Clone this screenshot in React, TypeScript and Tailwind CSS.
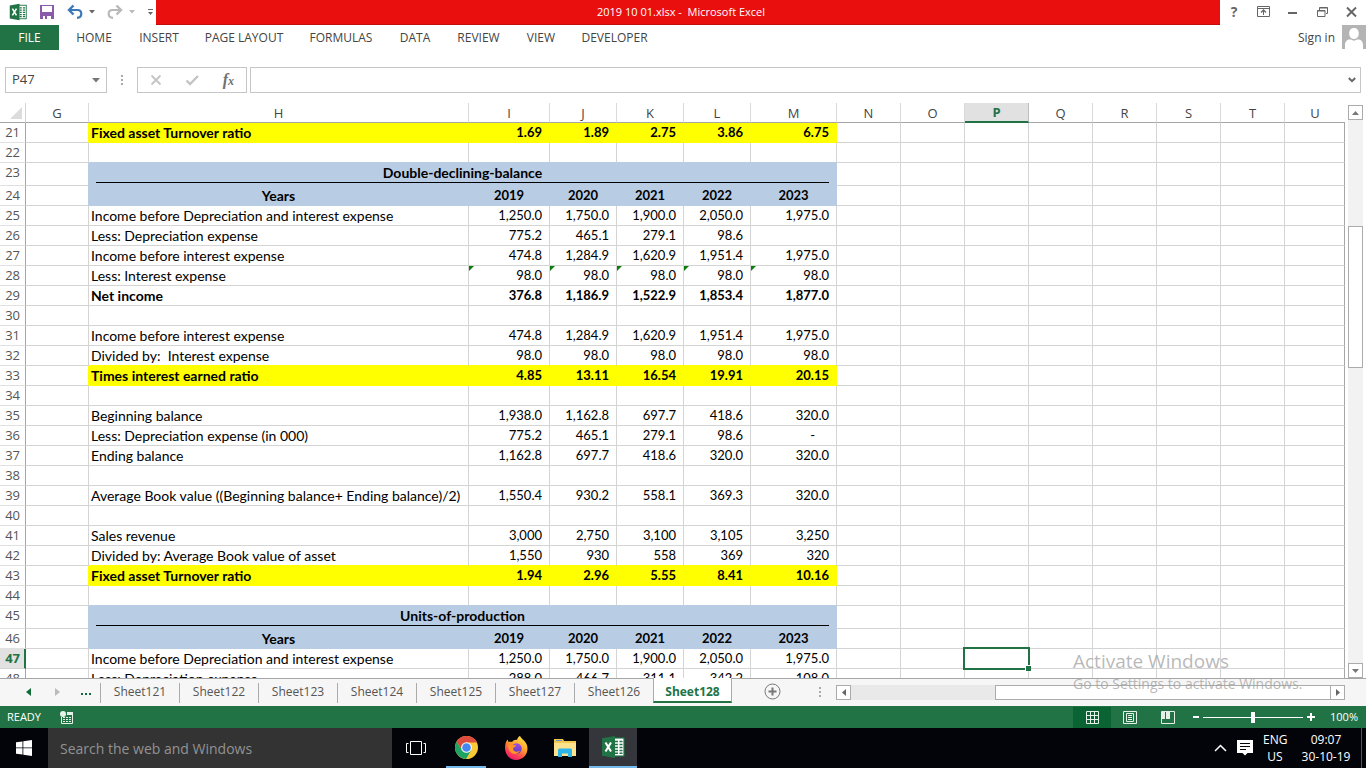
import React from "react";

const columns = ["G", "H", "I", "J", "K", "L", "M", "N", "O", "P", "Q", "R", "S", "T", "U"];
const blankColumns = ["N", "O", "P", "Q", "R", "S", "T", "U"];

type Kind = "plain" | "bold" | "ratio" | "title" | "years" | "empty" | "flagged";
type Row = { n: number; kind: Kind; label?: string; values?: string[] };

const rows: Row[] = [
  { n: 21, kind: "ratio", label: "Fixed asset Turnover ratio", values: ["1.69", "1.89", "2.75", "3.86", "6.75"] },
  { n: 22, kind: "empty" },
  { n: 23, kind: "title", label: "Double-declining-balance" },
  { n: 24, kind: "years", label: "Years", values: ["2019", "2020", "2021", "2022", "2023"] },
  { n: 25, kind: "plain", label: "Income before Depreciation and interest expense", values: ["1,250.0", "1,750.0", "1,900.0", "2,050.0", "1,975.0"] },
  { n: 26, kind: "plain", label: "Less: Depreciation expense", values: ["775.2", "465.1", "279.1", "98.6", ""] },
  { n: 27, kind: "plain", label: "Income before interest expense", values: ["474.8", "1,284.9", "1,620.9", "1,951.4", "1,975.0"] },
  { n: 28, kind: "flagged", label: "Less: Interest expense", values: ["98.0", "98.0", "98.0", "98.0", "98.0"] },
  { n: 29, kind: "bold", label: "Net income", values: ["376.8", "1,186.9", "1,522.9", "1,853.4", "1,877.0"] },
  { n: 30, kind: "empty" },
  { n: 31, kind: "plain", label: "Income before interest expense", values: ["474.8", "1,284.9", "1,620.9", "1,951.4", "1,975.0"] },
  { n: 32, kind: "plain", label: "Divided by:  Interest expense", values: ["98.0", "98.0", "98.0", "98.0", "98.0"] },
  { n: 33, kind: "ratio", label: "Times interest earned ratio", values: ["4.85", "13.11", "16.54", "19.91", "20.15"] },
  { n: 34, kind: "empty" },
  { n: 35, kind: "plain", label: "Beginning balance", values: ["1,938.0", "1,162.8", "697.7", "418.6", "320.0"] },
  { n: 36, kind: "plain", label: "Less: Depreciation expense (in 000)", values: ["775.2", "465.1", "279.1", "98.6", "-"] },
  { n: 37, kind: "plain", label: "Ending balance", values: ["1,162.8", "697.7", "418.6", "320.0", "320.0"] },
  { n: 38, kind: "empty" },
  { n: 39, kind: "plain", label: "Average Book value ((Beginning balance+ Ending balance)/2)", values: ["1,550.4", "930.2", "558.1", "369.3", "320.0"] },
  { n: 40, kind: "empty" },
  { n: 41, kind: "plain", label: "Sales revenue", values: ["3,000", "2,750", "3,100", "3,105", "3,250"] },
  { n: 42, kind: "plain", label: "Divided by: Average Book value of asset", values: ["1,550", "930", "558", "369", "320"] },
  { n: 43, kind: "ratio", label: "Fixed asset Turnover ratio", values: ["1.94", "2.96", "5.55", "8.41", "10.16"] },
  { n: 44, kind: "empty" },
  { n: 45, kind: "title", label: "Units-of-production" },
  { n: 46, kind: "years", label: "Years", values: ["2019", "2020", "2021", "2022", "2023"] },
  { n: 47, kind: "plain", label: "Income before Depreciation and interest expense", values: ["1,250.0", "1,750.0", "1,900.0", "2,050.0", "1,975.0"] },
  { n: 48, kind: "plain", label: "Less: Depreciation expense", values: ["288.0", "466.7", "311.1", "342.2", "108.0"] },
];

const ribbonTabs = [
  { name: "HOME", width: "w-16" },
  { name: "INSERT", width: "w-[66px]" },
  { name: "PAGE LAYOUT", width: "w-[104px]" },
  { name: "FORMULAS", width: "w-[90px]" },
  { name: "DATA", width: "w-[58px]" },
  { name: "REVIEW", width: "w-[69px]" },
  { name: "VIEW", width: "w-14" },
  { name: "DEVELOPER", width: "w-[91px]" },
];

const sheets = ["Sheet121", "Sheet122", "Sheet123", "Sheet124", "Sheet125", "Sheet127", "Sheet126"];

function ExcelLogo({ className }: { className: string }) {
  return (
    <svg viewBox="0 0 24 24" className={className} aria-hidden="true">
      <rect x="12" y="3" width="11" height="18" fill="#fff" stroke="#217346" strokeWidth="1.2" />
      <path d="M14 6.5h3M18.500 6.500h3M14 9.500h3M18.500 9.500h3M14 12.500h3M18.500 12.500h3M14 15.500h3M18.500 15.500h3M14 18.200h3M18.500 18.200h3" stroke="#217346" strokeWidth="1.600" />
      <path d="M1 3.200 14 1v22L1 20.800z" fill="#217346" />
      <path d="m4.500 7.500 5.500 9M10 7.500l-5.500 9" stroke="#fff" strokeWidth="2.100" />
    </svg>
  );
}

function TitleBar() {
  return (
    <header className="flex h-[25px] shrink-0 items-start">
      <div className="flex h-6 w-[156px] shrink-0 items-center">
        <ExcelLogo className="ml-[9px] h-[18px] w-[18px]" />
        <button aria-label="Save" className="ml-3">
          <svg viewBox="0 0 16 16" className="h-4 w-4">
            <path d="M1 1h14v14H1z" fill="#8a5bab" />
            <path d="M3 2h10v6H3zM4 10h8v5H4z" fill="#fff" />
            <path d="M4 10h8v2H8v3H6v-3H4zM12 10h1v5h-1z" fill="#8a5bab" />
          </svg>
        </button>
        <button aria-label="Undo" className="ml-3 flex items-center gap-1.5">
          <svg viewBox="0 0 16 16" className="h-4 w-4" fill="none" stroke="#3c78b8">
            <path d="M3 6h7.500c2.500 0 3.800 1.800 3.800 3.800 0 2.600-2 4-4.300 4" strokeWidth="2.200" />
            <path d="M6.500 1.500 2 6l4.500 4.500" strokeWidth="2.400" />
          </svg>
          <svg viewBox="0 0 6 4" className="h-1 w-1.5"><path d="M0 0h6L3 3.500z" fill="#666" /></svg>
        </button>
        <button aria-label="Redo" className="ml-3 flex items-center gap-1.5">
          <svg viewBox="0 0 16 16" className="h-4 w-4" fill="none" stroke="#b9b9b9">
            <path d="M13 6H5.500C3 6 1.700 7.800 1.700 9.800c0 2.600 2 4 4.300 4" strokeWidth="2.200" />
            <path d="M9.500 1.500 14 6l-4.500 4.500" strokeWidth="2.400" />
          </svg>
          <svg viewBox="0 0 6 4" className="h-1 w-1.5"><path d="M0 0h6L3 3.500z" fill="#b9b9b9" /></svg>
        </button>
        <button aria-label="Customize Quick Access Toolbar" className="ml-3">
          <svg viewBox="0 0 7 8" className="h-2 w-[7px]"><path d="M1 1.500h5" stroke="#666" /><path d="M1 4h5L3.500 7z" fill="#666" /></svg>
        </button>
      </div>
      <h1 className="flex h-full flex-1 items-center justify-center whitespace-pre border-b border-[#c00d0d] bg-[#ea0f0f] pr-3.5 text-[11px] text-white">
        {"2019 10 01.xlsx -  Microsoft Excel"}
      </h1>
      <div className="flex h-[23px] w-[146px] shrink-0 items-center">
        <button aria-label="Help" className="ml-2.5 w-2 text-[14px] leading-4 font-bold text-[#666]">?</button>
        <button aria-label="Ribbon display options" className="ml-[19px]">
          <svg viewBox="0 0 13 11" className="h-[11px] w-[13px]" fill="none" stroke="#666">
            <path d="M.5.500h12v10H.5zM.5 2.500h12M6.500 9V4.500" />
            <path d="M4 6.500 6.500 4 9 6.500" strokeWidth="1.300" />
          </svg>
        </button>
        <button aria-label="Minimize" className="ml-[18px]">
          <svg viewBox="0 0 9 11" className="h-[11px] w-[9px]"><path d="M0 7h9" stroke="#666" strokeWidth="2" /></svg>
        </button>
        <button aria-label="Restore" className="ml-5">
          <svg viewBox="0 0 11 10" className="h-2.5 w-[11px]" fill="none" stroke="#666">
            <path d="M2.500 3V.5h8v6H9M.5 3.500h7.500v6H.5zM.5 4h7.500M2.500 1h8" />
          </svg>
        </button>
        <button aria-label="Close" className="ml-[18px]">
          <svg viewBox="0 0 11 10" className="h-2.5 w-[11px]"><path d="m1 .5 9 9M10 .5l-9 9" stroke="#666" strokeWidth="2" /></svg>
        </button>
      </div>
    </header>
  );
}

function Ribbon() {
  return (
    <nav aria-label="Ribbon" className="flex h-[25px] shrink-0 items-stretch text-xs text-[#444]">
      <button className="mr-[3px] w-[59px] bg-[#217346] text-white">FILE</button>
      {ribbonTabs.map((t) => (
        <button key={t.name} className={`${t.width} whitespace-nowrap`}>{t.name}</button>
      ))}
      <button className="ml-auto mr-[7px]">Sign in</button>
      <svg viewBox="0 0 24 24" className="h-6 w-6" aria-hidden="true">
        <path d="M0 0h24v24H0z" fill="#b4b4b4" />
        <path d="M12 3c3 0 4.800 2.200 4.800 5.500S14.700 14 12 14 7.200 11.800 7.200 8.500 9 3 12 3zM3 24v-4c0-3.500 2-5.500 5-5.500h1c2 1.500 4 1.500 6 0h1c3 0 5 2 5 5.500v4z" fill="#fff" />
      </svg>
    </nav>
  );
}

function FormulaBar() {
  return (
    <div className="flex h-[53px] shrink-0 items-start pt-[17px] pr-[5px] pl-[5px]">
      <div className="flex h-[26px] w-[102px] items-center border border-[#c6c6c6]">
        <input aria-label="Name box" defaultValue="P47" className="w-0 flex-1 pl-1.5 text-[13px] text-[#444] outline-none" />
        <button aria-label="Open name list" className="mr-1.5">
          <svg viewBox="0 0 8 5" className="h-[5px] w-2"><path d="M0 0h8L4 4.500z" fill="#777" /></svg>
        </button>
      </div>
      <svg viewBox="0 0 2 10" className="mx-3.5 mt-2 h-2.5 w-0.5" aria-hidden="true"><path d="M0 0h2v2H0zM0 4h2v2H0zM0 8h2v2H0z" fill="#aaa" /></svg>
      <div className="mr-[3px] flex h-[26px] w-[110px] items-center justify-between border border-[#c6c6c6] pr-3 pl-3">
        <button aria-label="Cancel"><svg viewBox="0 0 12 12" className="h-3 w-3"><path d="m1.500 1.500 9 9M10.500 1.500l-9 9" stroke="#c4c4c4" strokeWidth="1.800" /></svg></button>
        <button aria-label="Enter"><svg viewBox="0 0 14 12" className="h-3 w-3.5"><path d="m1.500 6.500 3.500 3.500L13 2" fill="none" stroke="#c4c4c4" strokeWidth="2.400" /></svg></button>
        <button aria-label="Insert function" className="flex items-baseline font-['Liberation_Serif',serif] leading-5 font-bold text-[#707070] italic">
          <span className="text-base">f</span><span className="text-xs">x</span>
        </button>
      </div>
      <div className="flex h-[26px] flex-1 items-center border border-[#c6c6c6]">
        <input aria-label="Formula" className="h-full w-0 flex-1 px-1 text-[13px] outline-none" />
        <button aria-label="Expand formula bar" className="mr-1">
          <svg viewBox="0 0 8 6" className="h-1.5 w-2"><path d="m.8 1 3.200 3.200L7.200 1" fill="none" stroke="#666" strokeWidth="2" /></svg>
        </button>
      </div>
    </div>
  );
}

function fillOf(kind?: Kind) {
  if (kind === "ratio") return "yellow";
  if (kind === "title" || kind === "years") return "blue";
  return "none";
}

function SheetRow({ row, next }: { row: Row; next?: Row }) {
  const fill = fillOf(row.kind);
  const below = fillOf(next?.kind);
  const bg = fill === "yellow" ? "bg-[#ffff00]" : fill === "blue" ? "bg-[#b8cce4]" : "";
  const right = fill === "yellow" ? "border-r-[#ffff00]" : fill === "blue" ? "border-r-[#b8cce4]" : "border-r-[#d4d4d4]";
  const edge = fill !== "none" ? fill : below;
  const bottom = edge === "yellow" ? "border-b-[#ffff00]" : edge === "blue" ? "border-b-[#b8cce4]" : "border-b-[#d4d4d4]";
  const cell = `border-r border-b p-0 ${bg} ${right} ${bottom}`;
  const weight = row.kind === "plain" || row.kind === "flagged" || row.kind === "empty" ? "font-normal" : "font-bold";
  const selected = row.n === 47;
  return (
    <tr className={row.kind === "title" ? "h-[23px]" : "h-5"}>
      <th
        scope="row"
        className={`border-b p-0 text-right align-top font-['Open_Sans',sans-serif] text-[13px] leading-[19px] ${
          selected
            ? "border-r-2 border-r-[#217346] border-b-[#d4d4d4] bg-[#e1e1e1] pr-1 font-bold text-[#217346]"
            : "border-r border-r-[#a6a6a6] border-b-[#e0e0e0] pr-[5px] font-normal text-[#555]"
        }`}
      >
        {row.n}
      </th>
      <td className={`border-r border-b border-b-[#d4d4d4] p-0 ${right}`} />
      {row.kind === "title" ? (
        <td colSpan={6} className={`${cell} align-top font-bold`}>
          <div className="mx-[7px] h-5 border-b border-black text-center leading-5">{row.label}</div>
        </td>
      ) : (
        <>
          <td className={`${cell} ${weight} whitespace-pre ${row.kind === "years" ? "text-center" : "pl-0.5"}`}>{row.label}</td>
          {["I", "J", "K", "L", "M"].map((c, i) => (
            <td key={c} className={`${cell} ${weight} ${row.kind === "years" ? "text-center" : "pr-[7px] text-right"} relative text-[13px]`}>
              {row.kind === "flagged" && (
                <svg viewBox="0 0 5 5" className="absolute top-0 left-0 h-[5px] w-[5px]" aria-hidden="true"><path d="M0 0h5L0 5z" fill="#0a7d0a" /></svg>
              )}
              {row.values?.[i] === "-" ? <span className="pr-3.5">-</span> : row.values?.[i]}
            </td>
          ))}
        </>
      )}
      {blankColumns.map((c) => (
        <td key={c} className={`relative border-r border-b border-b-[#d4d4d4] p-0 ${c === "U" ? "border-r-[#a6a6a6]" : "border-r-[#d4d4d4]"}`}>
          {selected && c === "P" && (
            <div className="absolute -top-0.5 -right-0.5 -bottom-0.5 -left-0.5 z-10 border-2 border-[#217346]">
              <div className="absolute -right-[3px] -bottom-[3px] h-1.5 w-1.5 border-t border-l border-white bg-[#217346]" />
            </div>
          )}
        </td>
      ))}
    </tr>
  );
}

function Worksheet() {
  return (
    <main className="flex min-h-0 flex-1 border-b border-[#a6a6a6]">
      <div className="min-w-0 flex-1 overflow-hidden">
        <table className="w-full table-fixed border-separate border-spacing-0 font-['Lato',sans-serif] text-sm leading-[19px] text-black">
          <colgroup>
            <col className="w-[26px]" />
            <col className="w-[63px]" />
            <col className="w-[380px]" />
            <col className="w-[81px]" />
            <col className="w-[67px]" />
            <col className="w-[67px]" />
            <col className="w-[67px]" />
            <col className="w-[86px]" />
            <col className="w-16" />
            <col className="w-16" />
            <col className="w-16" />
            <col className="w-16" />
            <col className="w-16" />
            <col className="w-16" />
            <col className="w-16" />
            <col />
          </colgroup>
          <thead>
            <tr className="h-5 font-['Open_Sans',sans-serif] text-[13px] leading-[18px]">
              <td className="border-r border-b border-r-[#d4d4d4] border-b-[#a6a6a6] p-0">
                <svg viewBox="0 0 12 12" className="ml-2.5 h-3 w-3" aria-hidden="true"><path d="M12 0v12H0z" fill="#dcdcdc" /></svg>
              </td>
              {columns.map((c) => (
                <th
                  key={c}
                  scope="col"
                  className={
                    c === "P"
                      ? "border-r border-b-2 border-r-[#bdbdbd] border-b-[#217346] bg-[#e1e1e1] p-0 font-bold text-[#217346]"
                      : c === "U"
                        ? "border-b border-b-[#a6a6a6] p-0 font-normal text-[#444]"
                        : "border-r border-b border-r-[#dadada] border-b-[#a6a6a6] p-0 font-normal text-[#444]"
                  }
                >
                  {c}
                </th>
              ))}
            </tr>
          </thead>
          <tbody>
            {rows.map((r, i) => (
              <SheetRow key={r.n} row={r} next={rows[i + 1]} />
            ))}
          </tbody>
        </table>
      </div>
      <div className="flex w-[21px] shrink-0 flex-col items-center pt-0.5">
        <button aria-label="Scroll up" className="flex h-[15px] w-[15px] items-center justify-center border border-[#ababab] bg-white">
          <svg viewBox="0 0 7 4" className="h-1 w-[7px]"><path d="M0 4h7L3.500 0z" fill="#777" /></svg>
        </button>
        <div className="flex w-[15px] flex-1 flex-col bg-[#f2f2f2]">
          <div className="basis-[106px]" />
          <div className="h-[142px] border border-[#ababab] bg-white" />
        </div>
        <button aria-label="Scroll down" className="flex h-[15px] w-[15px] items-center justify-center border border-[#ababab] bg-white">
          <svg viewBox="0 0 7 4" className="h-1 w-[7px]"><path d="M0 0h7L3.500 4z" fill="#777" /></svg>
        </button>
      </div>
    </main>
  );
}

function SheetTabs() {
  return (
    <nav aria-label="Sheets" className="flex h-[27px] shrink-0 items-start bg-[#f6f6f6] text-xs text-[#555]">
      <div className="flex h-[25px] w-[100px] shrink-0 items-center">
        <button aria-label="Previous sheet" className="ml-[26px]"><svg viewBox="0 0 5 8" className="h-2 w-[5px]"><path d="M5 0v8L0 4z" fill="#0f6b3a" /></svg></button>
        <button aria-label="Next sheet" className="ml-6"><svg viewBox="0 0 5 8" className="h-2 w-[5px]"><path d="M0 0v8l5-4z" fill="#bbb" /></svg></button>
        <button aria-label="More sheets" className="ml-[21px] flex gap-0.5 pt-1">
          <span className="h-0.5 w-0.5 bg-[#0f6b3a]" /><span className="h-0.5 w-0.5 bg-[#0f6b3a]" /><span className="h-0.5 w-0.5 bg-[#0f6b3a]" />
        </button>
      </div>
      {sheets.map((s) => (
        <button key={s} className="mt-1 h-5 w-[79px] border-l border-[#ababab] pb-0.5">{s}</button>
      ))}
      <button className="-mt-px h-[25px] w-[79px] border-r border-b-2 border-l border-r-[#ababab] border-b-[#217346] border-l-[#ababab] bg-white pt-1 font-bold text-[#217346]">Sheet128</button>
      <button aria-label="New sheet" className="mt-1 ml-8">
        <svg viewBox="0 0 17 17" className="h-[17px] w-[17px]" fill="none" stroke="#777"><circle cx="8.500" cy="8.500" r="7.500" /><path d="M8.500 4.500v8M4.500 8.500h8" strokeWidth="2" /></svg>
      </button>
      <svg viewBox="0 0 2 10" className="mt-2 ml-[38px] h-2.5 w-0.5" aria-hidden="true"><path d="M0 0h2v2H0zM0 4h2v2H0zM0 8h2v2H0z" fill="#aaa" /></svg>
      <div className="mt-1.5 mr-[21px] ml-[15px] flex h-[15px] flex-1 bg-[#e9e9e9]">
        <button aria-label="Scroll left" className="flex w-[15px] items-center justify-center border border-[#ababab] bg-white"><svg viewBox="0 0 4 7" className="h-[7px] w-1"><path d="M4 0v7L0 3.500z" fill="#666" /></svg></button>
        <div className="flex-1" />
        <div className="w-[336px] border border-[#ababab] bg-white" />
        <button aria-label="Scroll right" className="-ml-px flex w-[15px] items-center justify-center border border-[#ababab] bg-white"><svg viewBox="0 0 4 7" className="h-[7px] w-1"><path d="M0 0v7l4-3.500z" fill="#666" /></svg></button>
      </div>
    </nav>
  );
}

function StatusBar() {
  return (
    <div className="flex h-[22px] shrink-0 items-center bg-[#217346] text-[11px] text-white">
      <span className="w-[60px] pl-[7px]">READY</span>
      <button aria-label="Record macro">
        <svg viewBox="0 0 13 13" className="h-[13px] w-[13px]">
          <path d="M1.500 6v6.500h11V4" fill="none" stroke="#e5f0e9" />
          <path d="M7 1h6v3H7z" fill="#e5f0e9" />
          <circle cx="3" cy="3" r="3" fill="#e5f0e9" />
          <path d="M3 6.500h2M6 6.500h2M9 6.500h2M3 8.500h2M6 8.500h2M9 8.500h2M3 10.500h2M6 10.500h2M9 10.500h2" stroke="#e5f0e9" />
        </svg>
      </button>
      <div className="ml-auto flex h-[21px] self-end">
        <button aria-label="Normal view" className="flex w-[38px] items-center justify-center bg-[#0a6332]">
          <svg viewBox="0 0 13 13" className="h-[13px] w-[13px]" fill="none" stroke="#e5f0e9"><path d="M.5.500h12v12H.5zM4.500 0v13M8.500 0v13M0 4.500h13M0 8.500h13" /></svg>
        </button>
        <button aria-label="Page layout view" className="flex w-[38px] items-center justify-center">
          <svg viewBox="0 0 14 13" className="h-[13px] w-3.5" fill="none" stroke="#e5f0e9"><path d="M.5.500h13v12H.5zM3.500 2.500h7v8h-7zM5 4.500h4M5 6.500h4M5 8.500h4" /></svg>
        </button>
        <button aria-label="Page break preview" className="flex w-[38px] items-center justify-center">
          <svg viewBox="0 0 14 13" className="h-[13px] w-3.5"><path d="M.5.500h13v12H.5z" fill="none" stroke="#e5f0e9" /><path d="M1 1h3v7H1zM5 1h4v7H5z" fill="#e5f0e9" /></svg>
        </button>
      </div>
      <button aria-label="Zoom out" className="ml-1.5"><svg viewBox="0 0 6 8" className="h-2 w-1.5"><path d="M0 4h6" stroke="#fff" strokeWidth="2" /></svg></button>
      <input
        aria-label="Zoom"
        type="range"
        min={0}
        max={100}
        defaultValue={50}
        className="mx-1 h-[11px] w-[100px] appearance-none bg-transparent [&::-webkit-slider-runnable-track]:h-px [&::-webkit-slider-runnable-track]:bg-white [&::-webkit-slider-thumb]:-mt-[5px] [&::-webkit-slider-thumb]:h-[11px] [&::-webkit-slider-thumb]:w-1 [&::-webkit-slider-thumb]:appearance-none [&::-webkit-slider-thumb]:bg-white"
      />
      <button aria-label="Zoom in"><svg viewBox="0 0 8 8" className="h-2 w-2"><path d="M0 4h8M4 0v8" stroke="#fff" strokeWidth="2" /></svg></button>
      <span className="mr-2 ml-3.5 w-[29px] text-right">100%</span>
    </div>
  );
}

function Taskbar() {
  return (
    <footer className="flex h-10 shrink-0 items-stretch bg-[#02040a] text-xs text-white">
      <button aria-label="Start" className="flex w-12 items-center justify-center">
        <svg viewBox="0 0 16 16" className="h-4 w-4" fill="#fff"><path d="M0 2.300 6.500 1.400v6.100H0zM7.300 1.300 16 0v7.500H7.300zM0 8.300h6.500v6.300L0 13.700zM7.300 8.300H16V16l-8.700-1.200z" /></svg>
      </button>
      <input aria-label="Search the web and Windows" placeholder="Search the web and Windows" className="w-[344px] bg-[#333] pt-0.5 pl-3 text-sm outline-none placeholder:text-[#929292]" />
      <button aria-label="Task view" className="flex w-12 items-center justify-center">
        <svg viewBox="0 0 20 14" className="h-3.5 w-5" fill="none" stroke="#fff"><path d="M4.500.500h11v13h-11zM2.500 2.500h-2v9h2M17.500 2.500h2v9h-2" /></svg>
      </button>
      <button aria-label="Chrome" className="mx-1.5 flex w-10 items-center justify-center border-b-2 border-[#76b9ed] pt-px">
        <svg viewBox="0 0 24 24" className="h-[23px] w-[23px]">
          <circle cx="12" cy="12" r="12" fill="#fbc935" />
          <path d="M1.600 6A12 12 0 0 1 22.400 6L22.700 6.700H12L7.400 14.650z" fill="#dd4b3e" />
          <path d="M1.600 6A12 12 0 0 0 11.500 24L17 14.700 7.400 14.650z" fill="#1da362" />
          <circle cx="12" cy="12" r="5.600" fill="#fff" /><circle cx="12" cy="12" r="4.500" fill="#4688f1" />
        </svg>
      </button>
      <button aria-label="Firefox" className="mx-1 flex w-10 items-center justify-center">
        <svg viewBox="0 0 24 24" className="h-6 w-6">
          <defs>
            <linearGradient id="fox" x1=".8" y1="0" x2=".25" y2="1"><stop offset="0" stopColor="#ffe845" /><stop offset=".45" stopColor="#ff9b2b" /><stop offset=".75" stopColor="#ff3f55" /><stop offset="1" stopColor="#e3186f" /></linearGradient>
            <linearGradient id="globe" x1="0" y1="0" x2="0" y2="1"><stop offset="0" stopColor="#a04be0" /><stop offset="1" stopColor="#5a3bc4" /></linearGradient>
          </defs>
          <path d="M1 12c0-3 .5-6 2.500-8.500l1 2.500C6 5.500 7 5.500 8 6c1.500-1.500 3-2.500 5-2 .5-2 1.500-3.500 3-4 1 3 7.500 5.500 7.500 12.500C23.500 19 18.500 24 12 24S1 18.500 1 12z" fill="url(#fox)" />
          <circle cx="12.500" cy="12.500" r="5.200" fill="url(#globe)" />
          <path d="M4 9c2-1 4-.5 5 0 1 .2 2.500 0 3.500.5-1 1.500-3 1.500-3.500 3 0 2.500 3 4.500 7 2-1.500 3.500-5.500 4.500-8.500 2.500C5 15.500 4 12 4 9z" fill="#ff9526" />
        </svg>
      </button>
      <button aria-label="File Explorer" className="mx-1 flex w-[41px] items-center justify-center">
        <svg viewBox="0 0 22 20" className="h-5 w-[22px]">
          <path d="M0 1h9l1 2h12v15H0z" fill="#f4c84e" /><path d="M2 2h6v1H2z" fill="#5b9bd5" /><path d="M0 5h22v13H0z" fill="#fde28d" />
          <path d="M4 19v-7q0-1.500 1.500-1.500h11Q18 10.500 18 12v7h-4v-3.500H8V19z" fill="#2bb5ea" />
        </svg>
      </button>
      <button aria-label="Excel" className="flex w-12 items-center justify-center border-b-2 border-[#76b9ed] bg-[#34363b]"><ExcelLogo className="h-6 w-6" /></button>
      <div className="ml-auto flex items-center border-r border-[#555] pr-2.5">
        <button aria-label="Show hidden icons"><svg viewBox="0 0 13 8" className="h-2 w-[13px]"><path d="m1 7 5.500-5.500L12 7" fill="none" stroke="#fff" strokeWidth="1.500" /></svg></button>
        <button aria-label="Notifications" className="ml-2.5"><svg viewBox="0 0 16 16" className="h-4 w-4"><path d="M0 0h16v13h-5.500L8 15.500 5.500 13H0z" fill="#fff" /><path d="M3 3.500h10M3 6.500h10M3 9.500h6" stroke="#02040a" /></svg></button>
        <div className="ml-2.5 w-6 text-center leading-[17px]">ENG<br />US</div>
        <div className="ml-3.5 w-[50px] text-center leading-[17px] whitespace-nowrap">09:07<br />30-10-19</div>
      </div>
      <div className="w-1" />
    </footer>
  );
}

export default function App() {
  return (
    <div className="relative flex h-screen flex-col overflow-hidden bg-white font-['Open_Sans',sans-serif]">
      <TitleBar />
      <Ribbon />
      <FormulaBar />
      <Worksheet />
      <SheetTabs />
      <StatusBar />
      <Taskbar />
      <div className="pointer-events-none absolute right-[57px] bottom-[73px] z-20 w-[236px] whitespace-nowrap text-[#999]/70">
        <p className="text-[19px] leading-6">Activate Windows</p>
        <p className="text-sm leading-[22px]">Go to Settings to activate Windows.</p>
      </div>
    </div>
  );
}
